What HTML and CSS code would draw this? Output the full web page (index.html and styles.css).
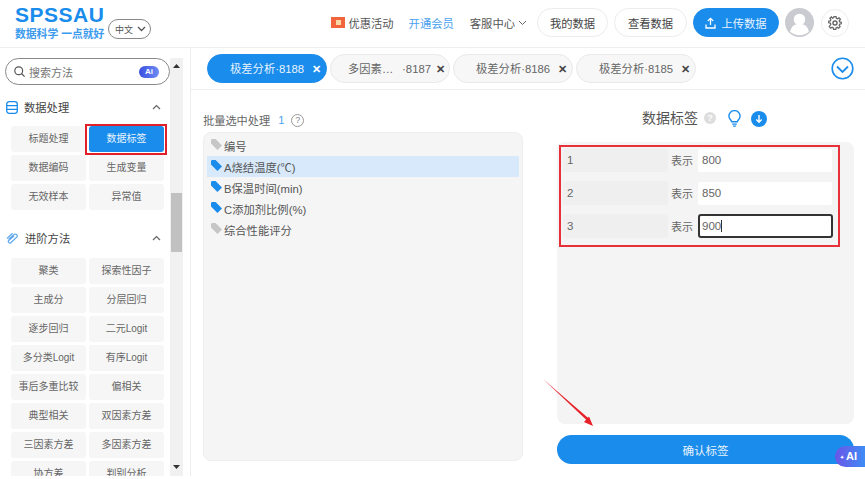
FILE: index.html
```html
<!DOCTYPE html>
<html lang="zh">
<head>
<meta charset="utf-8">
<title>SPSSAU</title>
<link rel="stylesheet" href="styles.css">
</head>
<body>
<header class="topbar">
  <div class="brand">
    <div class="logo-name">SPSSAU</div>
    <div class="logo-sub">数据科学 一点就好</div>
  </div>
  <div class="lang">中文<svg width="9" height="6" viewBox="0 0 9 6"><path d="M1 1l3.500 3.500L8 1" fill="none" stroke="#555" stroke-width="1.300"/></svg></div>
  <nav class="nav">
    <span class="promo"><svg width="14" height="11" viewBox="0 0 14 11"><rect width="14" height="11" fill="#f2643c"/><rect x="5" y="3" width="5" height="5" fill="#fbd9a8"/></svg>优惠活动</span>
    <span class="vip">开通会员</span>
    <span class="service">客服中心<svg width="9" height="6" viewBox="0 0 9 6"><path d="M1 1l3.500 3.500L8 1" fill="none" stroke="#666" stroke-width="1"/></svg></span>
    <button class="pill pill-mine">我的数据</button>
    <button class="pill pill-view">查看数据</button>
    <button class="pill pill-primary"><svg width="11" height="12" viewBox="0 0 11 12"><path d="M5.500 8V1.500M2.800 4L5.500 1.300 8.200 4M1 7.500V11h9V7.500" fill="none" stroke="#fff" stroke-width="1.300"/></svg>上传数据</button>
    <span class="avatar"><svg width="29" height="29" viewBox="0 0 28 28"><circle cx="14" cy="14" r="14" fill="#c9cbd0"/><circle cx="14" cy="11" r="5.500" fill="#fff"/><path d="M5 23c1-6 5-7.500 9-7.500s8 1.500 9 7.500a14 14 0 0 1-18 0z" fill="#fff"/></svg></span>
    <span class="gear"><svg width="14" height="14" viewBox="0 0 24 24"><path d="M10 2h4l.6 3 2.300 1 2.600-1.700 2.800 2.800L20 9.700l1 2.300 3 .6v3l-3 .6-1 2.300 1.700 2.600-2.800 2.800-2.600-1.700-2.300 1-.6 3h-4l-.6-3-2.300-1-2.600 1.700-2.800-2.800L4 16.500l-1-2.300-3-.6v-3l3-.6 1-2.300-1.700-2.600 2.800-2.800L7 4.700 9.400 3.700z" transform="translate(1.200 -.6) scale(.9)" fill="none" stroke="#666" stroke-width="2.400"/><circle cx="12" cy="12" r="3.500" fill="none" stroke="#666" stroke-width="2.400"/></svg></span>
  </nav>
</header>
<div class="main">
  <aside class="sidebar">
    <div class="side-scroll">
      <div class="search">
        <svg width="11" height="11" viewBox="0 0 14 14"><circle cx="6" cy="6" r="5" fill="none" stroke="#555" stroke-width="1.500"/><path d="M9.500 9.500L13.500 13.500" stroke="#555" stroke-width="1.500"/></svg>
        <span class="search-text">搜索方法</span>
        <span class="ai-chip">Ai</span>
      </div>
      <section class="group">
        <div class="group-head">
          <svg width="12" height="13" viewBox="0 0 12 13"><rect x=".7" y=".7" width="10.600" height="11.600" rx="2.500" fill="none" stroke="#1a8cec" stroke-width="1.300"/><path d="M1 4.600h10M1 8.400h10" stroke="#1a8cec" stroke-width="1.300"/></svg>
          <span>数据处理</span>
          <svg class="caret" width="9" height="6" viewBox="0 0 9 6"><path d="M1 5l3.500-3.500L8 5" fill="none" stroke="#666" stroke-width="1.200"/></svg>
        </div>
        <div class="methods">
          <div class="method">标题处理</div>
          <div class="method method-active">数据标签</div>
          <div class="method">数据编码</div>
          <div class="method">生成变量</div>
          <div class="method">无效样本</div>
          <div class="method">异常值</div>
        </div>
      </section>
      <section class="group group-two">
        <div class="group-head">
          <svg width="13" height="12" viewBox="0 0 13 12"><path d="M2.500 7.500l5.500-5a2 2 0 0 1 3 2.500l-6 5.500a1.500 1.500 0 0 1-2.300-2L8 4" fill="none" stroke="#5fa8ee" stroke-width="1.200"/><path d="M1 6.500l5.500-5.300" fill="none" stroke="#5fa8ee" stroke-width="1.200"/></svg>
          <span>进阶方法</span>
          <svg class="caret" width="9" height="6" viewBox="0 0 9 6"><path d="M1 5l3.500-3.500L8 5" fill="none" stroke="#666" stroke-width="1.200"/></svg>
        </div>
        <div class="methods">
          <div class="method">聚类</div>
          <div class="method">探索性因子</div>
          <div class="method">主成分</div>
          <div class="method">分层回归</div>
          <div class="method">逐步回归</div>
          <div class="method">二元Logit</div>
          <div class="method">多分类Logit</div>
          <div class="method">有序Logit</div>
          <div class="method">事后多重比较</div>
          <div class="method">偏相关</div>
          <div class="method">典型相关</div>
          <div class="method">双因素方差</div>
          <div class="method">三因素方差</div>
          <div class="method">多因素方差</div>
          <div class="method">协方差</div>
          <div class="method">判别分析</div>
        </div>
      </section>
    </div>
    <div class="scrollbar">
      <svg class="arrow-up" width="7" height="4" viewBox="0 0 7 4"><path d="M0 4l3.500-4L7 4z" fill="#333"/></svg>
      <div class="thumb"></div>
      <svg class="arrow-down" width="7" height="4" viewBox="0 0 7 4"><path d="M0 0l3.500 4L7 0z" fill="#333"/></svg>
    </div>
  </aside>
  <main class="content">
    <div class="tabs">
      <div class="tab tab-active"><span class="tab-label">极差分析·8188</span><span class="tab-x">✕</span></div>
      <div class="tab tab-long"><span class="tab-label tab-label-gap"><span>多因素…</span><span>·8187</span></span><span class="tab-x">✕</span></div>
      <div class="tab"><span class="tab-label">极差分析·8186</span><span class="tab-x">✕</span></div>
      <div class="tab"><span class="tab-label">极差分析·8185</span><span class="tab-x">✕</span></div>
      <svg class="tabs-more" width="23" height="23" viewBox="0 0 23 23"><circle cx="11.500" cy="11.500" r="10.300" fill="none" stroke="#1a8cec" stroke-width="1.600"/><path d="M6 9.500l5.500 5.500L17 9.500" fill="none" stroke="#1a8cec" stroke-width="1.800"/></svg>
    </div>
    <div class="panels">
      <section class="left-panel">
        <div class="batch">批量选中处理<span class="batch-num">1</span><span class="help">?</span></div>
        <div class="var-box">
          <div class="var"><svg class="tag tag-off" width="11" height="11" viewBox="0 0 12 12"><path d="M0 1.500A1.500 1.500 0 0 1 1.500 0H5l7 7-5 5-7-7z"/></svg>编号</div>
          <div class="var var-hl"><svg class="tag" width="11" height="11" viewBox="0 0 12 12"><path d="M0 1.500A1.500 1.500 0 0 1 1.500 0H5l7 7-5 5-7-7z"/></svg>A烧结温度(℃)</div>
          <div class="var"><svg class="tag" width="11" height="11" viewBox="0 0 12 12"><path d="M0 1.500A1.500 1.500 0 0 1 1.500 0H5l7 7-5 5-7-7z"/></svg>B保温时间(min)</div>
          <div class="var"><svg class="tag" width="11" height="11" viewBox="0 0 12 12"><path d="M0 1.500A1.500 1.500 0 0 1 1.500 0H5l7 7-5 5-7-7z"/></svg>C添加剂比例(%)</div>
          <div class="var"><svg class="tag tag-off" width="11" height="11" viewBox="0 0 12 12"><path d="M0 1.500A1.500 1.500 0 0 1 1.500 0H5l7 7-5 5-7-7z"/></svg>综合性能评分</div>
        </div>
      </section>
      <section class="right-panel">
        <div class="title-row">
          <span class="title">数据标签</span>
          <span class="title-help">?</span>
          <svg class="bulb" width="13" height="17" viewBox="0 0 14 18"><path d="M4 12.500C3.500 10.500 1 9.500 1 6.500a6 6 0 0 1 12 0c0 3-2.500 4-3 6z" fill="none" stroke="#1a8cec" stroke-width="1.500"/><path d="M4.500 15h5M5.500 17.300h3" stroke="#1a8cec" stroke-width="1.400"/></svg>
          <svg class="down" width="16" height="16" viewBox="0 0 16 16"><circle cx="8" cy="8" r="8" fill="#1a8cec"/><path d="M8 4v7M5.300 8.500L8 11.200l2.700-2.700" fill="none" stroke="#fff" stroke-width="1.400"/></svg>
        </div>
        <div class="label-box">
          <div class="label-rows">
            <div class="label-row"><div class="key">1</div><span class="means">表示</span><div class="val">800</div></div>
            <div class="label-row"><div class="key">2</div><span class="means">表示</span><div class="val">850</div></div>
            <div class="label-row"><div class="key">3</div><span class="means">表示</span><div class="val val-focus">900<i class="text-caret"></i></div></div>
          </div>
        </div>
        <button class="confirm">确认标签</button>
      </section>
    </div>
  </main>
</div>
<svg class="red-arrow" width="52" height="49" viewBox="0 0 52 49"><path d="M0 0L46 39.800 44.300 41.700z" fill="#e8202a"/><path d="M50 47l-9-4 5-5.500z" fill="#e8202a"/></svg>
<div class="ai-float"><span class="spark">✦</span>AI</div>
</body>
</html>
```
FILE: styles.css
```css
* { box-sizing: border-box; }
html, body { margin: 0; padding: 0; }
body {
  width: 865px;
  height: 479px;
  overflow: hidden;
  position: relative;
  background: #fff;
  color: #555;
  font-family: "Liberation Sans", "Noto Sans CJK SC", sans-serif;
  font-size: 11px;
}
.topbar {
  height: 48px;
  display: flex;
  align-items: flex-start;
  padding-left: 15px;
  border-bottom: 1px solid #eee;
}
.brand { width: 93px; padding-top: 4px; }
.logo-name {
  font-size: 21px;
  line-height: 22px;
  font-weight: 700;
  color: #1a8cec;
  letter-spacing: .5px;
}
.logo-sub {
  margin-top: 1px;
  font-size: 10.800px;
  line-height: 14px;
  font-weight: 700;
  color: #3d9bee;
  white-space: nowrap;
}
.lang {
  margin-top: 19px;
  width: 43px;
  height: 20px;
  border: 1px solid #888;
  border-radius: 10px;
  display: flex;
  align-items: center;
  gap: 4px;
  padding-left: 6px;
  font-size: 9px;
  color: #555;
}
.nav {
  margin-left: auto;
  margin-right: 16px;
  margin-top: 8px;
  display: flex;
  align-items: center;
  height: 29px;
  font-size: 11.300px;
  color: #555;
}
.promo { display: flex; align-items: center; gap: 3px; }
.vip { margin-left: 15px; color: #4aa2f0; }
.service { margin-left: 16px; display: flex; align-items: center; gap: 3px; }
.pill {
  height: 29px;
  margin-left: 6px;
  padding: 0;
  border: 1px solid #ececec;
  border-radius: 15px;
  background: #fff;
  color: #444;
  font: inherit;
}
.pill-mine { width: 71px; margin-left: 10px; }
.pill-view { width: 73px; }
.pill-primary {
  width: 86px;
  background: #1a8cec;
  border-color: #1a8cec;
  color: #e8f3fd;
  display: flex;
  align-items: center;
  justify-content: center;
  gap: 5px;
}
.avatar { margin-left: 6px; width: 29px; height: 29px; display: block; }
.avatar svg { display: block; }
.gear {
  margin-left: 7px;
  width: 28px;
  height: 28px;
  border: 1px solid #ececec;
  border-radius: 50%;
  display: flex;
  align-items: center;
  justify-content: center;
}
.main { display: flex; height: 428px; }
.sidebar {
  width: 191px;
  height: 428px;
  padding-right: 7px;
  display: flex;
  align-items: flex-start;
  border-right: 1px solid #eee;
  flex: none;
}
.side-scroll {
  width: 170px;
  height: 428px;
  overflow: hidden;
  padding: 10px 0 0 5px;
  flex: none;
}
.search {
  width: 165px;
  height: 27px;
  border: 1px solid #888;
  border-radius: 14px;
  display: flex;
  align-items: center;
  padding: 0 10px 0 8px;
  gap: 4px;
}
.search-text { font-size: 11px; color: #777; }
.ai-chip {
  margin-left: auto;
  width: 20px;
  height: 12px;
  border-radius: 6px;
  background: linear-gradient(90deg, #3c4fe0, #6d8cf5);
  color: #fff;
  font-size: 8px;
  font-weight: 700;
  line-height: 12px;
  text-align: center;
}
.group { margin-top: 12px; }
.group-two { margin-top: 18px; }
.group-head {
  height: 20px;
  display: flex;
  align-items: center;
  gap: 6px;
  padding: 0 9px 0 1px;
  font-size: 11.300px;
  color: #444;
}
.group-head .caret { margin-left: auto; }
.methods {
  margin: 9px 0 0 6px;
  width: 153px;
  display: grid;
  grid-template-columns: 75px 75px;
  column-gap: 3px;
  row-gap: 3px;
}
.group-two .methods { margin-top: 10px; }
.method {
  height: 26px;
  border-radius: 3px;
  background: #f6f6f6;
  color: #666;
  font-size: 10px;
  line-height: 26px;
  text-align: center;
  white-space: nowrap;
}
.method-active {
  position: relative;
  background: #1a8cec;
  color: #e8f3fd;
}
.method-active::after {
  content: "";
  position: absolute;
  inset: -2px -3px -3px -4px;
  border: 2px solid #e0202a;
}
.scrollbar {
  width: 13px;
  background: #f1f1f1;
  flex: none;
  padding-top: 16px;
  position: relative;
  display: flex;
  flex-direction: column;
  align-items: center;
  margin-top: 10px;
  height: 418px;
}
.arrow-up { position: absolute; top: 6px; left: 3px; }
.arrow-down { position: absolute; bottom: 7px; left: 3px; }
.thumb {
  margin-top: 119px;
  width: 11px;
  height: 59px;
  background: #c1c1c1;
}
.content { flex: 1; min-width: 0; }
.tabs {
  height: 42px;
  padding: 6px 0 0 16px;
  border-bottom: 1px solid #eee;
  display: flex;
  align-items: flex-start;
  gap: 3px;
  position: relative;
}
.tab {
  width: 120px;
  height: 29px;
  border: 1px solid #e9e9e9;
  border-radius: 15px;
  background: #f7f7f7;
  color: #666;
  font-size: 11.300px;
  line-height: 16px;
  display: flex;
  align-items: center;
  padding-left: 22px;
  white-space: nowrap;
}
.tab-active { background: #1a8cec; border-color: #1a8cec; color: #e8f3fd; }
.tab-long { padding-left: 17px; }
.tab-label { width: 73px; }
.tab-label-gap { width: 83px; display: flex; justify-content: space-between; }
.tab-x { margin-left: 9px; font-size: 10.500px; font-weight: 700; color: #444; }
.tab-active .tab-x { color: #fff; }
.tab-long .tab-x { margin-left: 5px; }
.tabs-more { position: absolute; right: 11px; top: 9px; }
.panels { display: flex; padding-left: 12px; }
.left-panel { width: 320px; padding-top: 20px; }
.batch {
  height: 20px;
  display: flex;
  align-items: center;
  font-size: 11.200px;
  color: #666;
}
.batch-num { margin-left: 8px; color: #4aa2f0; }
.help {
  margin-left: 7px;
  width: 13px;
  height: 13px;
  border: 1px solid #999;
  border-radius: 50%;
  font-size: 9px;
  line-height: 11px;
  text-align: center;
  color: #888;
}
.var-box {
  margin-top: 2px;
  width: 320px;
  height: 329px;
  border: 1px solid #eee;
  border-radius: 8px;
  background: #f5f5f5;
  padding: 2px 3px;
}
.var {
  height: 21px;
  display: flex;
  align-items: center;
  gap: 2px;
  padding-left: 4px;
  font-size: 11.300px;
  color: #555;
}
.var-hl { background: #d7e9fb; }
.tag { fill: #1a8cec; flex: none; margin-top: -2px; }
.tag-off { fill: #c6c6c6; }
.right-panel { margin-left: 34px; width: 297px; display: flex; flex-direction: column; }
.title-row {
  height: 52px;
  padding: 18px 0 0 85px;
  display: flex;
  align-items: flex-start;
}
.title { font-size: 14px; line-height: 20px; color: #555; }
.title-help {
  margin: 4px 0 0 6px;
  width: 12px;
  height: 12px;
  border-radius: 50%;
  background: #ddd;
  color: #fff;
  font-size: 9px;
  font-weight: 700;
  line-height: 12px;
  text-align: center;
}
.bulb { margin: 2px 0 0 12px; }
.down { margin: 3px 0 0 10px; }
.label-box {
  height: 282px;
  border-radius: 8px;
  background: #f4f4f4;
  padding: 3px 0 0 2px;
}
.label-rows {
  width: 281px;
  height: 102px;
  border: 2px solid #e8303a;
  padding: 1px 0 0 2px;
  display: flex;
  flex-direction: column;
  gap: 9px;
}
.label-row { display: flex; align-items: center; height: 24px; }
.key {
  width: 105px;
  height: 24px;
  border-radius: 3px;
  background: #efefef;
  color: #666;
  font-size: 11.500px;
  line-height: 24px;
  padding-left: 4px;
}
.means { margin-left: 3px; width: 27px; font-size: 11px; color: #666; }
.val {
  width: 134px;
  height: 23px;
  border-radius: 2px;
  background: #fff;
  color: #666;
  font-size: 11.500px;
  line-height: 23px;
  padding-left: 4px;
}
.val-focus {
  width: 135px;
  height: 24px;
  border: 2px solid #333;
  border-radius: 3px;
  line-height: 20px;
  padding-left: 2px;
}
.text-caret {
  display: inline-block;
  width: 1px;
  height: 12px;
  background: #333;
  vertical-align: -2px;
}
.confirm {
  margin-top: 11px;
  height: 29px;
  border: 0;
  border-radius: 15px;
  background: #1a8cec;
  color: #e8f3fd;
  font: inherit;
  font-size: 11.500px;
  padding: 0;
}
.red-arrow { position: absolute; left: 543px; top: 379px; }
.ai-float {
  position: absolute;
  left: 835px;
  top: 446px;
  width: 30px;
  height: 21px;
  border-radius: 11px 0 0 11px;
  background: linear-gradient(90deg, #6a55e8, #3f8cf5);
  color: #fff;
  font-size: 11px;
  font-weight: 700;
  line-height: 21px;
  padding-left: 5px;
  white-space: nowrap;
}
.spark { font-size: 5px; margin-right: 2px; vertical-align: 1px; }
```
